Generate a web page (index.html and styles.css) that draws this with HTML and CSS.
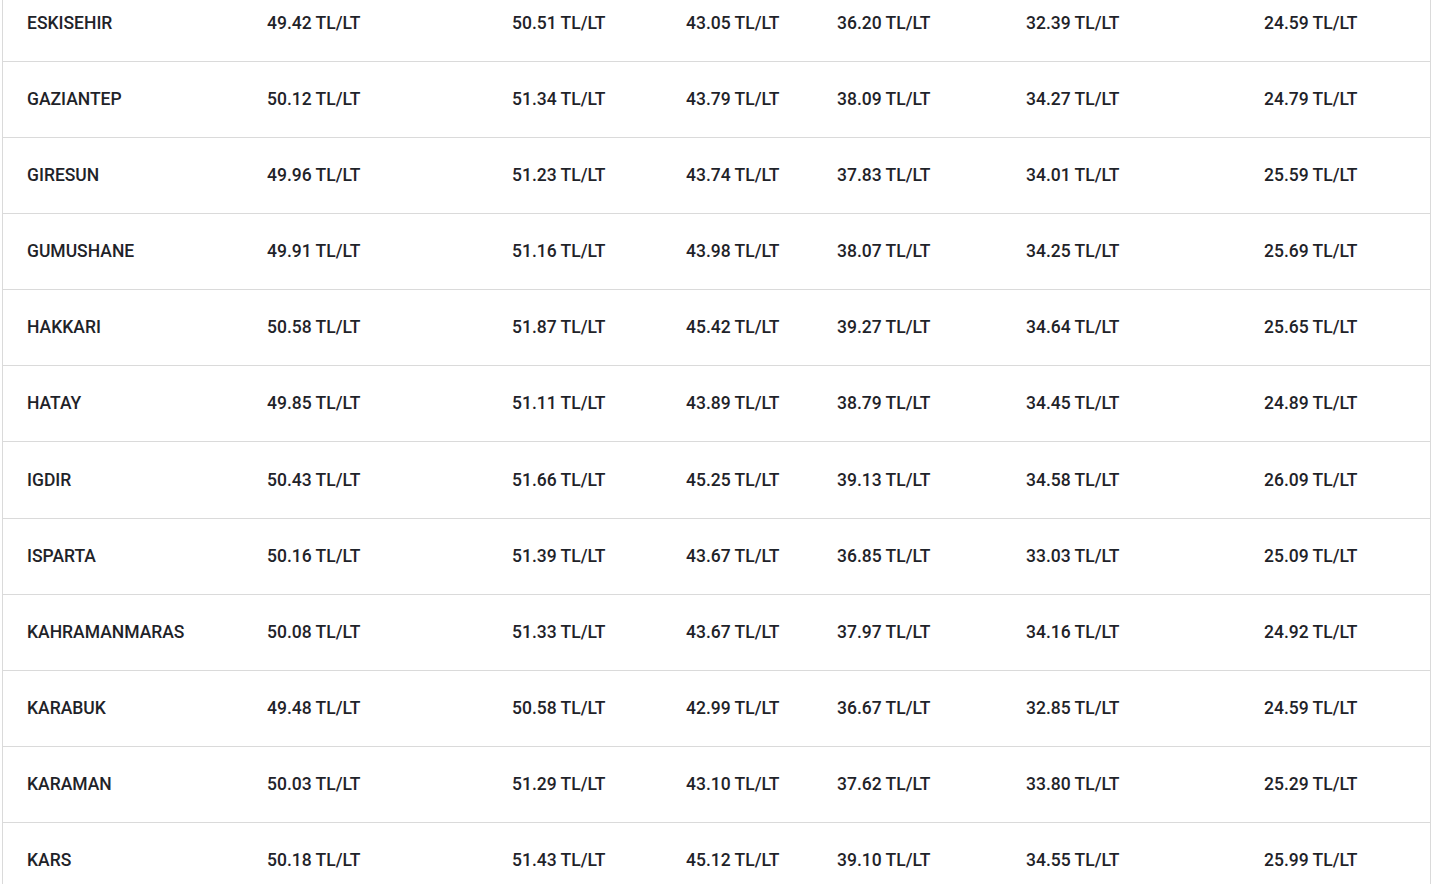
FILE: index.html
```html
<!DOCTYPE html>
<html lang="tr">
<head>
<meta charset="utf-8">
<title>Akaryakıt Fiyatları</title>
<link rel="stylesheet" href="styles.css">
</head>
<body>
<div class="page">
  <div class="price-table">
    <div class="row"><div class="cell city">ESKISEHIR</div><div class="cell">49.42 TL/LT</div><div class="cell">50.51 TL/LT</div><div class="cell">43.05 TL/LT</div><div class="cell">36.20 TL/LT</div><div class="cell">32.39 TL/LT</div><div class="cell">24.59 TL/LT</div></div>
    <div class="row"><div class="cell city">GAZIANTEP</div><div class="cell">50.12 TL/LT</div><div class="cell">51.34 TL/LT</div><div class="cell">43.79 TL/LT</div><div class="cell">38.09 TL/LT</div><div class="cell">34.27 TL/LT</div><div class="cell">24.79 TL/LT</div></div>
    <div class="row"><div class="cell city">GIRESUN</div><div class="cell">49.96 TL/LT</div><div class="cell">51.23 TL/LT</div><div class="cell">43.74 TL/LT</div><div class="cell">37.83 TL/LT</div><div class="cell">34.01 TL/LT</div><div class="cell">25.59 TL/LT</div></div>
    <div class="row"><div class="cell city">GUMUSHANE</div><div class="cell">49.91 TL/LT</div><div class="cell">51.16 TL/LT</div><div class="cell">43.98 TL/LT</div><div class="cell">38.07 TL/LT</div><div class="cell">34.25 TL/LT</div><div class="cell">25.69 TL/LT</div></div>
    <div class="row"><div class="cell city">HAKKARI</div><div class="cell">50.58 TL/LT</div><div class="cell">51.87 TL/LT</div><div class="cell">45.42 TL/LT</div><div class="cell">39.27 TL/LT</div><div class="cell">34.64 TL/LT</div><div class="cell">25.65 TL/LT</div></div>
    <div class="row"><div class="cell city">HATAY</div><div class="cell">49.85 TL/LT</div><div class="cell">51.11 TL/LT</div><div class="cell">43.89 TL/LT</div><div class="cell">38.79 TL/LT</div><div class="cell">34.45 TL/LT</div><div class="cell">24.89 TL/LT</div></div>
    <div class="row"><div class="cell city">IGDIR</div><div class="cell">50.43 TL/LT</div><div class="cell">51.66 TL/LT</div><div class="cell">45.25 TL/LT</div><div class="cell">39.13 TL/LT</div><div class="cell">34.58 TL/LT</div><div class="cell">26.09 TL/LT</div></div>
    <div class="row"><div class="cell city">ISPARTA</div><div class="cell">50.16 TL/LT</div><div class="cell">51.39 TL/LT</div><div class="cell">43.67 TL/LT</div><div class="cell">36.85 TL/LT</div><div class="cell">33.03 TL/LT</div><div class="cell">25.09 TL/LT</div></div>
    <div class="row"><div class="cell city">KAHRAMANMARAS</div><div class="cell">50.08 TL/LT</div><div class="cell">51.33 TL/LT</div><div class="cell">43.67 TL/LT</div><div class="cell">37.97 TL/LT</div><div class="cell">34.16 TL/LT</div><div class="cell">24.92 TL/LT</div></div>
    <div class="row"><div class="cell city">KARABUK</div><div class="cell">49.48 TL/LT</div><div class="cell">50.58 TL/LT</div><div class="cell">42.99 TL/LT</div><div class="cell">36.67 TL/LT</div><div class="cell">32.85 TL/LT</div><div class="cell">24.59 TL/LT</div></div>
    <div class="row"><div class="cell city">KARAMAN</div><div class="cell">50.03 TL/LT</div><div class="cell">51.29 TL/LT</div><div class="cell">43.10 TL/LT</div><div class="cell">37.62 TL/LT</div><div class="cell">33.80 TL/LT</div><div class="cell">25.29 TL/LT</div></div>
    <div class="row"><div class="cell city">KARS</div><div class="cell">50.18 TL/LT</div><div class="cell">51.43 TL/LT</div><div class="cell">45.12 TL/LT</div><div class="cell">39.10 TL/LT</div><div class="cell">34.55 TL/LT</div><div class="cell">25.99 TL/LT</div></div>
  </div>
</div>
</body>
</html>
```

FILE: styles.css
```css
html, body {
  margin: 0;
  padding: 0;
  background: #ffffff;
  overflow: hidden;
}

.page {
  padding-left: 2px;
  height: 884px;
  overflow: hidden;
}

.price-table {
  width: 1429px;
  margin-top: -14px;
  border-left: 1px solid #dadada;
  border-right: 1px solid #dadada;
  box-sizing: border-box;
  font-family: Roboto, "Liberation Sans", Arial, sans-serif;
  font-weight: 500;
  font-size: 17.5px;
  color: #1f2329;
}

.row {
  display: grid;
  grid-template-columns: 240px 245px 174px 151px 189px 238px 1fr;
  height: 76.08px;
  box-sizing: border-box;
  border-bottom: 1px solid #dadada;
}

.cell {
  display: flex;
  align-items: center;
  padding-left: 24px;
  padding-bottom: 1px;
  white-space: nowrap;
}
```
